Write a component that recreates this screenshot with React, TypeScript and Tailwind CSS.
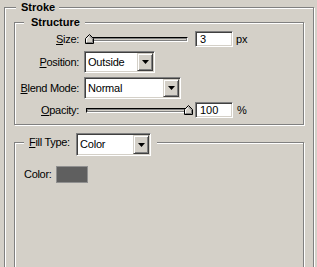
import React from "react";

const font = { fontFamily: '"Liberation Sans", Arial, sans-serif' };

function U({ c }: { c: string }) {
  return <span className="underline underline-offset-[1px]">{c}</span>;
}

function Thumb() {
  return (
    <svg width="9" height="10" viewBox="0 0 9 10" className="block">
      <polygon points="4.5,0.5 8.5,4.5 8.5,9.5 0.5,9.5 0.5,4.5" fill="#d4d0c8" stroke="#000" strokeWidth="1" />
      <polyline points="1.5,8.5 1.5,5 4.5,2" fill="none" stroke="#fff" strokeWidth="1" />
      <polyline points="4.5,2 7.5,5 7.5,8.5 1.5,8.5" fill="none" stroke="#808080" strokeWidth="1" />
    </svg>
  );
}

function Slider({ atEnd }: { atEnd?: boolean }) {
  return (
    <div className="relative w-[108px] h-[16px]">
      <div className="absolute left-[1px] right-[5px] top-[6px] h-[5px] bg-[#d4d0c8] border-t border-l border-[#000] border-b border-r border-b-[#fff] border-r-[#fff] shadow-[inset_1px_1px_0_#808080,inset_-1px_-1px_0_#808080]" />
      <div className={"absolute top-[3px] " + (atEnd ? "right-0" : "left-0")}>
        <Thumb />
      </div>
    </div>
  );
}

function TextBox({ value }: { value: string }) {
  return (
    <div className="w-[38px] h-[16px] bg-white border border-t-[#808080] border-l-[#808080] border-b-[#fff] border-r-[#fff] shadow-[inset_1px_1px_0_#404040,inset_-1px_-1px_0_#d4d0c8] pl-[4px] flex items-center text-[11px] leading-[13px] text-black">
      {value}
    </div>
  );
}

function Select({ value, w, h = "h-[22px]" }: { value: string; w: string; h?: string }) {
  return (
    <div
      className={
        w +
        " " +
        h +
        " bg-white border border-t-[#808080] border-l-[#808080] border-b-[#fff] border-r-[#fff] shadow-[inset_1px_1px_0_#404040,inset_-1px_-1px_0_#d4d0c8] p-[1px] flex"
      }
    >
      <div className="flex-1 flex items-center pl-[2px] text-[11px] leading-[13px] text-black tracking-[-0.2px]">{value}</div>
      <div className="w-[16px] bg-[#d4d0c8] border border-t-[#d4d0c8] border-l-[#d4d0c8] border-b-[#404040] border-r-[#404040] shadow-[inset_1px_1px_0_#fff,inset_-1px_-1px_0_#808080] flex items-center justify-center">
        <svg width="7" height="4" viewBox="0 0 7 4" className="block">
          <polygon points="0,0 7,0 3.5,4" fill="#000" />
        </svg>
      </div>
    </div>
  );
}

const etched =
  "relative border border-[#808080] shadow-[inset_1px_1px_0_#fff,1px_1px_0_#fff]";

export default function App() {
  return (
    <div
      className="w-[317px] h-[267px] overflow-hidden bg-[#d4d0c8] pl-[4px] pt-[7px] text-black"
      style={font}
    >
      <div className={etched + " w-[310px] h-[300px]"}>
        <div className="absolute left-[11px] top-[-7px] bg-[#d4d0c8] pl-[5px] pr-[4px] text-[11px] leading-[13px] font-bold">
          Stroke
        </div>

        {/* Structure */}
        <div className={etched + " ml-[9px] mt-[14px] w-[290px] h-[103px]"}>
          <div className="absolute left-[9px] top-[-7px] bg-[#d4d0c8] pl-[7px] pr-[5px] text-[11px] leading-[13px] font-bold">
            Structure
          </div>
          <div className="flex flex-col pt-[8px] text-[11px] leading-[13px]">
            <div className="flex items-center h-[16px]">
              <div className="w-[64px] text-right tracking-[-0.3px]">
                <U c="S" />ize:
              </div>
              <div className="ml-[6px]">
                <Slider />
              </div>
              <div className="ml-[2px]">
                <TextBox value="3" />
              </div>
              <div className="ml-[3px]">px</div>
            </div>
            <div className="flex items-center h-[22px] mt-[4px]">
              <div className="w-[64px] text-right tracking-[-0.3px]">
                <U c="P" />osition:
              </div>
              <div className="ml-[5px]">
                <Select value="Outside" w="w-[71px]" />
              </div>
            </div>
            <div className="flex items-center h-[22px] mt-[4px]">
              <div className="w-[64px] text-right tracking-[-0.3px]">
                <U c="B" />lend Mode:
              </div>
              <div className="ml-[5px]">
                <Select value="Normal" w="w-[97px]" />
              </div>
            </div>
            <div className="flex items-center h-[16px] mt-[3px]">
              <div className="w-[64px] text-right tracking-[-0.3px]">
                <U c="O" />pacity:
              </div>
              <div className="ml-[6px]">
                <Slider atEnd />
              </div>
              <div className="ml-[2px]">
                <TextBox value="100" />
              </div>
              <div className="ml-[4px]">%</div>
            </div>
          </div>
        </div>

        {/* Fill */}
        <div className={etched + " ml-[9px] mt-[17px] w-[290px] h-[200px]"}>
          <div className="absolute left-[9px] top-[-10px] bg-[#d4d0c8] pl-[5px] pr-[6px] flex items-start text-[11px] leading-[13px]">
            <div className="w-[47px] mt-[3px] tracking-[-0.3px]">
              <U c="F" />ill Type:
            </div>
            <Select value="Color" w="w-[75px]" h="h-[23px]" />
          </div>
          <div className="flex items-center pl-[9px] pt-[23px] text-[11px] leading-[13px]">
            <div className="w-[32px] tracking-[-0.3px]">Color:</div>
            <div className="w-[32px] h-[17px] bg-[#5f5f5f] border border-[#909090]" />
          </div>
        </div>
      </div>
    </div>
  );
}
